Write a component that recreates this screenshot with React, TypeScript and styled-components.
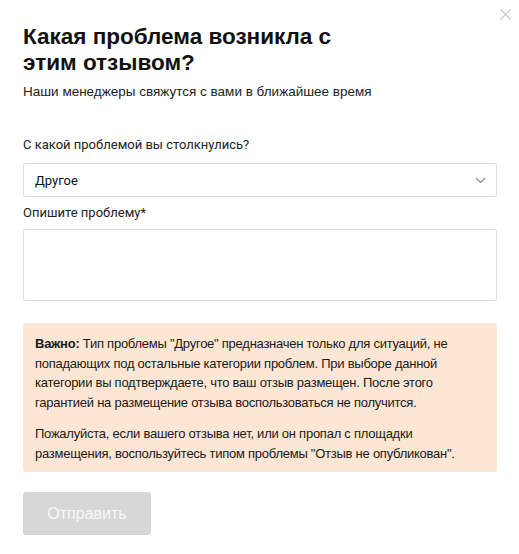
import React, {useState} from 'react'
import styled, {createGlobalStyle} from 'styled-components'

const GlobalStyle = createGlobalStyle`
  html, body {
    margin: 0;
    padding: 0;
    background: #fff;
  }
  body {
    font-family: "Liberation Sans", Arial, sans-serif;
    color: #111;
  }
`

const Modal = styled.div`
  position: relative;
  width: 519px;
  box-sizing: border-box;
  padding: 24px 22px 19px 23px;
  display: flex;
  flex-direction: column;
`

const CloseButton = styled.button`
  position: absolute;
  top: 8px;
  right: 7px;
  width: 13px;
  height: 13px;
  padding: 0;
  border: 0;
  background: none;
  cursor: pointer;
  display: flex;
`

const Title = styled.h2`
  margin: 0;
  font-size: 22.5px;
  line-height: 26px;
  font-weight: 700;
  color: #111;
  width: 340px;
`

const Subtitle = styled.p`
  margin: 8px 0 0;
  font-size: 13.5px;
  line-height: 16px;
  color: #222;
`

const Label = styled.label<{$top: number}>`
  display: block;
  margin-top: ${(p) => p.$top}px;
  font-family: Roboto, "Liberation Sans", sans-serif;
  font-size: 13px;
  line-height: 16px;
  color: #222;
`

const SelectBox = styled.div`
  margin-top: 10px;
  height: 34px;
  box-sizing: border-box;
  border: 1px solid #dcdcdc;
  border-radius: 3px;
  display: flex;
  align-items: center;
  justify-content: space-between;
  padding: 0 10px 0 11px;
  font-family: Roboto, "Liberation Sans", sans-serif;
  font-size: 13px;
  color: #111;
`

const TextArea = styled.textarea`
  display: block;
  margin-top: 8px;
  width: 100%;
  height: 72px;
  box-sizing: border-box;
  border: 1px solid #dcdcdc;
  border-radius: 3px;
  resize: none;
  outline: none;
  font-family: Roboto, "Liberation Sans", sans-serif;
  font-size: 13px;
  padding: 8px 11px;
`

const Notice = styled.div`
  margin-top: 22px;
  background: #fde6d4;
  border-radius: 3px;
  padding: 11px 12px 9px 12px;
  font-size: 13px;
  line-height: 19.5px;
  letter-spacing: -0.25px;
  color: #1a1a1a;

  p {
    margin: 0;
  }
  p + p {
    margin-top: 12px;
  }
`

const SubmitButton = styled.button`
  margin-top: 20px;
  width: 128px;
  height: 43px;
  border: 0;
  border-radius: 3px;
  background: #d7d7d7;
  color: #f8f8f8;
  font-family: "Liberation Sans", Arial, sans-serif;
  font-size: 16px;
  cursor: default;
`

const App: React.FC = () => {
  const [text, setText] = useState('')

  return (
    <>
      <GlobalStyle />
      <Modal>
        <CloseButton aria-label="Закрыть">
          <svg width="13" height="13" viewBox="0 0 13 13">
            <path d="M1.5 1.5 L11.5 11.5 M11.5 1.5 L1.5 11.5" stroke="#c4c4c4" strokeWidth="1.1" fill="none" />
          </svg>
        </CloseButton>
        <Title>Какая проблема возникла с этим отзывом?</Title>
        <Subtitle>Наши менеджеры свяжутся с вами в ближайшее время</Subtitle>

        <Label $top={37}>С какой проблемой вы столкнулись?</Label>
        <SelectBox>
          <span>Другое</span>
          <svg width="11" height="7" viewBox="0 0 11 7">
            <path d="M1 1 L5.5 5.5 L10 1" stroke="#888" strokeWidth="1.1" fill="none" />
          </svg>
        </SelectBox>

        <Label $top={8}>Опишите проблему*</Label>
        <TextArea value={text} onChange={(e) => setText(e.target.value)} />

        <Notice>
          <p>
            <b>Важно:</b> Тип проблемы "Другое" предназначен только для ситуаций, не попадающих под остальные категории проблем. При выборе данной категории вы подтверждаете, что ваш отзыв размещен. После этого гарантией на размещение отзыва воспользоваться не получится.
          </p>
          <p>
            Пожалуйста, если вашего отзыва нет, или он пропал с площадки размещения, воспользуйтесь типом проблемы "Отзыв не опубликован".
          </p>
        </Notice>

        <div>
          <SubmitButton disabled>Отправить</SubmitButton>
        </div>
      </Modal>
    </>
  )
}

export default App
